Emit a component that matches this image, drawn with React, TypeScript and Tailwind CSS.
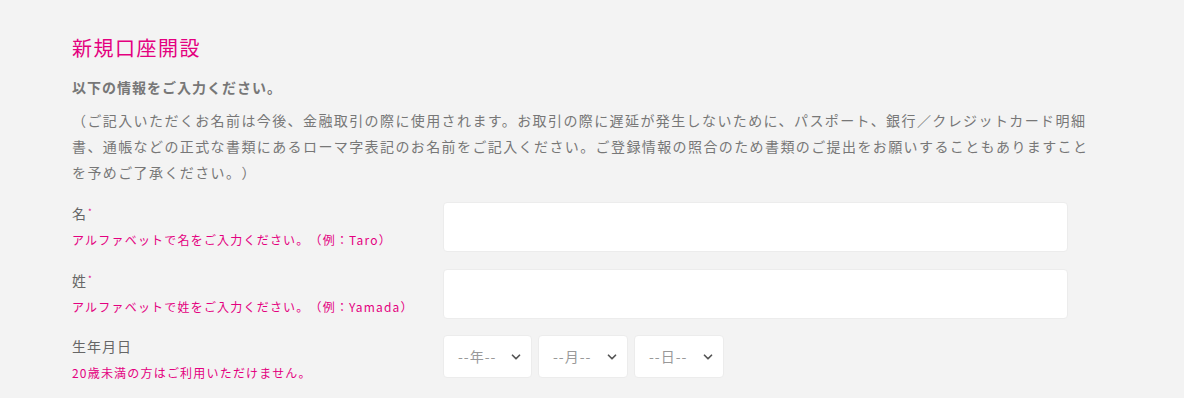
import { ChevronDown } from 'lucide-react';

const font = { fontFamily: '"Noto Sans CJK JP", "Noto Sans", sans-serif' };

function Field({ label, hint, required = true, children }: { label: string; hint: string; required?: boolean; children: React.ReactNode }) {
  return (
    <div className="flex items-start">
      <div className="w-[371px] shrink-0">
        <div className="text-[14px] leading-[22px] tracking-[1px] text-[#666]">
          {label}
          {required && <sup className="text-[8px] text-[#e4007f] ml-[1px]">*</sup>}
        </div>
        <div className="text-[12px] leading-[18px] mt-[7px] tracking-[1.2px] text-[#e4007f]">{hint}</div>
      </div>
      {children}
    </div>
  );
}

function DateSelect({ text, width }: { text: string; width: string }) {
  return (
    <div className={`${width} h-[43px] bg-white rounded-[4px] border border-[#ececec] flex items-center justify-between pl-[14px] pr-[8px]`}>
      <span className="text-[14px] tracking-[1px] text-[#999]">{text}</span>
      <ChevronDown size={14} strokeWidth={3} className="text-[#555]" />
    </div>
  );
}

export default function App() {
  return (
    <div className="min-h-screen w-[1184px] h-[398px] overflow-hidden bg-[#f3f3f3] [text-spacing-trim:space-all]" style={font}>
      <div className="pl-[72px] pr-[88px] pt-[34px]">
        <h1 className="text-[20px] leading-[28px] tracking-[1.5px] text-[#e4007f]">新規口座開設</h1>
        <p className="mt-[15px] text-[14px] leading-[20px] tracking-[1px] font-bold text-[#777]">以下の情報をご入力ください。</p>
        <p className="mt-[10px] text-[14px] leading-[26px] tracking-[1.4px] text-[#777]">
          （ご記入いただくお名前は今後、金融取引の際に使用されます。お取引の際に遅延が発生しないために、パスポート、銀行／クレジットカード明細書、通帳などの正式な書類にあるローマ字表記のお名前をご記入ください。ご登録情報の照合のため書類のご提出をお願いすることもありますことを予めご了承ください。）
        </p>
        <div className="mt-[17px] flex flex-col gap-[16.5px]">
          <Field label="名" hint="アルファベットで名をご入力ください。（例：Taro）">
            <div className="w-[625px] h-[50px] bg-white rounded-[4px] border border-[#ececec]" />
          </Field>
          <Field label="姓" hint="アルファベットで姓をご入力ください。（例：Yamada）">
            <div className="w-[625px] h-[50px] bg-white rounded-[4px] border border-[#ececec]" />
          </Field>
          <Field label="生年月日" hint="20歳未満の方はご利用いただけません。" required={false}>
            <div className="flex gap-[6px]">
              <DateSelect text="--年--" width="w-[89px]" />
              <DateSelect text="--月--" width="w-[90px]" />
              <DateSelect text="--日--" width="w-[90px]" />
            </div>
          </Field>
        </div>
      </div>
    </div>
  );
}
